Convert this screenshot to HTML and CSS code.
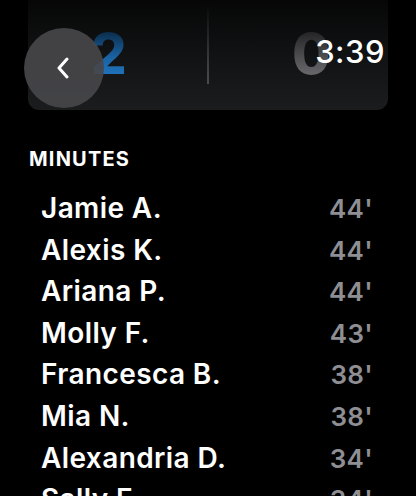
FILE: index.html
```html
<!DOCTYPE html>
<html lang="en">
<head>
    <meta charset="UTF-8">
    <meta name="viewport" content="width=device-width, initial-scale=1.0">
    <title>Minutes</title>
    <link rel="stylesheet" href="styles.css">
</head>
<body>
    <div class="score-card">
        <div class="team team-home"><span class="score score-blue">2</span></div>
        <div class="divider"></div>
        <div class="team team-away"><span class="score score-gray">0</span></div>
    </div>

    <button class="back-btn" aria-label="Back">
        <svg width="16" height="22" viewBox="0 0 16 22">
            <path d="M12 2 L4 11 L12 20" fill="none" stroke="#fff" stroke-width="3" stroke-linecap="round" stroke-linejoin="round"/>
        </svg>
    </button>
    <div class="clock">3:39</div>

    <h3 class="section-title">MINUTES</h3>
    <ul class="players">
        <li><span class="name">Jamie A.</span><span class="mins">44'</span></li>
        <li><span class="name">Alexis K.</span><span class="mins">44'</span></li>
        <li><span class="name">Ariana P.</span><span class="mins">44'</span></li>
        <li><span class="name">Molly F.</span><span class="mins">43'</span></li>
        <li><span class="name">Francesca B.</span><span class="mins">38'</span></li>
        <li><span class="name">Mia N.</span><span class="mins">38'</span></li>
        <li><span class="name">Alexandria D.</span><span class="mins">34'</span></li>
        <li><span class="name">Sally F.</span><span class="mins">34'</span></li>
    </ul>
</body>
</html>
```

FILE: styles.css
```css
body {
    margin: 0;
    background: #000;
    color: #fff;
    font-family: Inter, "Noto Sans", sans-serif;
    overflow: hidden;
}
.score-card {
    display: grid;
    grid-template-columns: 1fr 2px 1fr;
    margin: -12px 28px 0;
    height: 122px;
    border-radius: 11px;
    background: linear-gradient(to bottom, #040404 0%, #101112 50%, #1b1c1e 100%);
}
.team {
    display: flex;
    align-items: flex-start;
}
.team-home {
    padding-left: 63px;
}
.team-away {
    padding-left: 83px;
}
.score {
    margin-top: 38px;
    font-size: 56px;
    font-weight: 800;
    line-height: 1;
    -webkit-background-clip: text;
    background-clip: text;
    color: transparent;
}
.score-blue {
    background-image: linear-gradient(to bottom, #082036 0%, #1a62a2 55%, #2178c4 100%);
}
.score-gray {
    background-image: linear-gradient(to bottom, #1a1a1b 0%, #4e4e51 55%, #727276 100%);
}
.divider {
    margin-top: 17px;
    height: 79px;
    background: linear-gradient(to bottom, rgba(90, 90, 94, 0) 0%, #4a4b4e 100%);
}
.back-btn {
    position: absolute;
    left: 24px;
    top: 28px;
    width: 80px;
    height: 80px;
    border: none;
    border-radius: 50%;
    background: rgba(70, 70, 74, 0.92);
    display: flex;
    align-items: center;
    justify-content: center;
    padding: 0 2px 0 0;
}
.clock {
    position: absolute;
    right: 31px;
    top: 33px;
    font-size: 31px;
    font-weight: 500;
    letter-spacing: 0.5px;
}
.section-title {
    margin: 36px 0 0 29px;
    font-size: 20px;
    font-weight: 700;
    letter-spacing: 1.2px;
    line-height: 26px;
}
.players {
    list-style: none;
    margin: 16px 0 0;
    padding: 0 43px 0 41px;
}
.players li {
    display: flex;
    justify-content: space-between;
    align-items: baseline;
    height: 41.6px;
    line-height: 41.6px;
}
.name {
    font-size: 28px;
    font-weight: 600;
    letter-spacing: 0.4px;
}
.mins {
    font-size: 26px;
    font-weight: 600;
    color: #8e8e93;
    letter-spacing: 0.3px;
}
```
